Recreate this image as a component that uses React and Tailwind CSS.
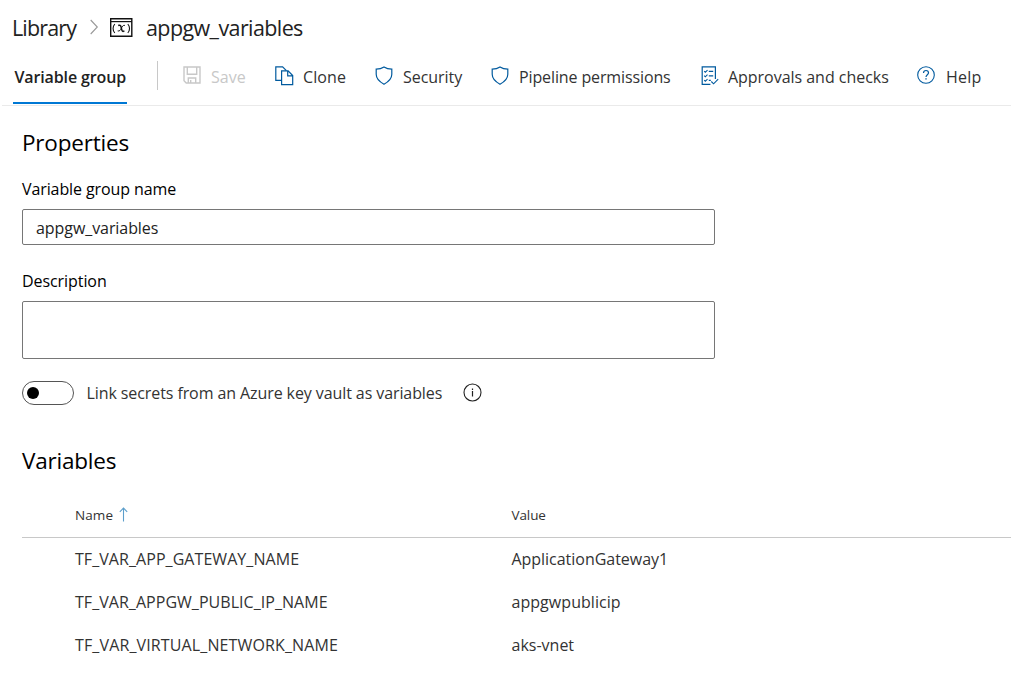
const SAVE_COLOR = "#c8c8c8";
const BLUE = "#005a9e";

const rows = [
  ["TF_VAR_APP_GATEWAY_NAME", "tracking-[0.06px]", "ApplicationGateway1", "tracking-[-0.03px]"],
  ["TF_VAR_APPGW_PUBLIC_IP_NAME", "tracking-[0.04px]", "appgwpublicip", "tracking-[0.05px]"],
  ["TF_VAR_VIRTUAL_NETWORK_NAME", "tracking-[0.13px]", "aks-vnet", "tracking-normal"],
];

function VariableIcon() {
  return (
    <svg className="h-[20px] w-[23px] shrink-0" viewBox="0 0 23 20" fill="none" stroke="#111">
      <path d="M.7 .7h21.1v17.6H.7z" strokeWidth="1.4" />
      <path d="M.7 3.6h21.1" strokeWidth="1.2" />
      <path d="M4.8 6c-2.3 2.5-2.3 6.5 0 9M17.8 6c2.3 2.5 2.3 6.5 0 9" strokeWidth="1.1" />
      <path d="M8.2 7.5c1.5-.8 2.5-.2 2.9 1.6l.7 2.8c.4 1.6 1.3 2 2.6.9" strokeWidth="1.5" />
      <path d="M14.9 7.4c-1.8-.5-2.8 1.2-3.6 2.9s-1.7 3.2-3.6 2.6" strokeWidth="1" />
    </svg>
  );
}

function SaveIcon() {
  return (
    <svg className="h-[18px] w-[18px]" viewBox="0 0 18 18" fill="none" stroke={SAVE_COLOR} strokeWidth="1.4">
      <path d="M1 1h16v16H3.2L1 14.8zM4.3 1v7.3h9.4V1M5.3 17v-5h7.4v5M7.7 14v3" />
    </svg>
  );
}

function CloneIcon() {
  return (
    <svg className="h-[20px] w-[19px]" viewBox="0 0 19 20" fill="none" stroke={BLUE} strokeWidth="1.2">
      <path d="M6.6 14.4H.8V.8h6.8l3.8 3.8" />
      <path d="M6.6 4.9h6.5l4.6 4.7v9H6.6zM12.7 4.9v5h5" />
    </svg>
  );
}

function ShieldIcon() {
  return (
    <svg className="h-[19px] w-[18px]" viewBox="0 0 18 19" fill="none" stroke={BLUE} strokeWidth="1.2">
      <path d="M9 .9c2.2 1.5 4.8 2.2 7.8 2.2v5.2c0 4.2-2.9 7.3-7.8 9.9-4.9-2.6-7.8-5.7-7.8-9.9V3.1C4.2 3.1 6.8 2.4 9 .9z" />
    </svg>
  );
}

function ChecksIcon() {
  return (
    <svg className="h-[20px] w-[18px]" viewBox="0 0 18 20" fill="none" stroke={BLUE} strokeWidth="1.2">
      <path d="M14.4 13V.8H1.2v17.6h8.2" />
      <path d="M7.8 5.4h4.4M7.8 9.9h4.4M7.8 14.4h2M3.2 5.2l1.1 1.1 2.2-2.2M3.2 9.7l1.1 1.1 2.2-2.2M3.2 14.2l1.1 1.1 2.2-2.2M10.3 15.5l2.3 2.3 4.6-4.6" strokeWidth="1.1" />
    </svg>
  );
}

function HelpIcon() {
  return (
    <svg className="h-[18px] w-[18px]" viewBox="0 0 18 18" fill="none" stroke={BLUE} strokeWidth="1.1">
      <circle cx="9" cy="9" r="8.3" />
      <path d="M6.5 7c0-1.6 1-2.5 2.5-2.5s2.5.9 2.5 2.3c0 1.9-2.5 2-2.5 4.3" strokeWidth="1.2" />
      <path d="M8.3 12.3h1.4v1.3H8.3z" fill={BLUE} stroke="none" />
    </svg>
  );
}

function InfoIcon() {
  return (
    <svg className="-mt-px h-[19px] w-[19px]" viewBox="0 0 19 19" fill="none" stroke="#222" strokeWidth="1.1">
      <circle cx="9.5" cy="9.5" r="8.5" />
      <path d="M9.5 8v5.4M9.5 5.6v1.4" strokeWidth="1.2" />
    </svg>
  );
}

function Action({ icon, label, width, gap }) {
  return (
    <button className={`flex shrink-0 items-start whitespace-nowrap text-left ${width} ${gap}`}>
      {icon}
      {label}
    </button>
  );
}

export default function App() {
  return (
    <div className="h-[688px] w-[1011px] overflow-hidden bg-white font-['Open_Sans',sans-serif] text-[16px] leading-[22px] text-[#333]">
      <header className="flex h-[56px] items-start pl-[12px] pt-[14px] text-[21.5px] leading-[28px] text-[#222]">
        <span className="w-[78px] tracking-[-0.85px]">Library</span>
        <svg className="mt-[5px] h-[16px] w-[20px]" viewBox="0 0 20 16" fill="none" stroke="#999" strokeWidth="1.1">
          <path d="M.7 1l6.6 7-6.6 7" />
        </svg>
        <div className="mt-[4px] w-[36px]"><VariableIcon /></div>
        <h1 className="tracking-[-0.6px]">appgw_variables</h1>
      </header>

      <nav className="ml-[2px] flex h-[50px] items-start border-b border-[#eaeaea] pl-[11px]">
        <div className="h-[48px] w-[114px] border-b-2 border-[#0078d4] pl-[1.5px] pt-[10px] font-semibold tracking-[-0.13px] whitespace-nowrap text-[#222]">Variable group</div>
        <div className="ml-[30px] mt-[5px] h-[29px] w-px bg-[#c8c8c8]" />
        <div className="flex items-start pl-[25px] pt-[10px]">
          <Action width="w-[92px] text-[#c8c8c8]" gap="gap-[10px]" icon={<SaveIcon />} label={<span>Save</span>} />
          <Action width="w-[100px]" gap="gap-[9px]" icon={<CloneIcon />} label={<span className="tracking-[0.1px]">Clone</span>} />
          <Action width="w-[116px]" gap="gap-[10px]" icon={<ShieldIcon />} label={<span className="tracking-[-0.05px]">Security</span>} />
          <Action width="w-[210px]" gap="gap-[10px]" icon={<ShieldIcon />} label={<span className="tracking-[-0.12px]">Pipeline permissions</span>} />
          <Action width="w-[216px]" gap="gap-[9px]" icon={<ChecksIcon />} label={<span className="tracking-[-0.03px]">Approvals and checks</span>} />
          <Action width="w-[70px]" gap="gap-[11px]" icon={<HelpIcon />} label={<span className="tracking-[0.2px]">Help</span>} />
        </div>
      </nav>

      <main className="pl-[22px] text-black">
        <h2 className="h-[72px] pt-[23px] text-[22.5px] leading-[28px] tracking-[-0.2px]">Properties</h2>
        <label className="block h-[31px] tracking-[-0.1px]">Variable group name</label>
        <div className="flex h-[36px] w-[693px] items-center rounded-[2px] border border-[#767676] pl-[13px] pt-[2px] tracking-[-0.07px] text-[#222]">appgw_variables</div>
        <label className="mt-[25px] block h-[31px] tracking-[-0.07px]">Description</label>
        <div className="h-[58px] w-[693px] rounded-[2px] border border-[#767676]" />

        <div className="mt-[22px] flex h-[24px] items-center text-[#333]">
          <div className="flex h-[24px] w-[52px] items-center rounded-full border border-[#555] pl-[4px]">
            <div className="size-[12px] rounded-full bg-black" />
          </div>
          <span className="ml-[12.5px] w-[376.5px] tracking-[-0.09px]">Link secrets from an Azure key vault as variables</span>
          <InfoIcon />
        </div>

        <h2 className="mt-[42px] h-[58px] text-[22.5px] leading-[28px] tracking-[-0.2px]">Variables</h2>
        <div className="flex h-[33px] border-b border-[#c8c8c8] pl-[53px] text-[13.5px] leading-[20px] text-[#333]">
          <div className="flex w-[436.5px] gap-[6px]">
            <span className="tracking-[0.1px]">Name</span>
            <svg className="mt-[2px] h-[15px] w-[9px]" viewBox="0 0 9 15" fill="none" stroke="#5c9ecb" strokeWidth="1.1">
              <path d="M4.5 14.5V1.2M.8 4.8l3.7-3.7 3.7 3.7" />
            </svg>
          </div>
          <span className="tracking-[-0.1px]">Value</span>
        </div>
        {rows.map(([name, nameTracking, value, valueTracking]) => (
          <div key={name} className="flex h-[43px] items-center pb-[2px] pl-[53px] text-[#333]">
            <span className={`w-[436.5px] ${nameTracking}`}>{name}</span>
            <span className={valueTracking}>{value}</span>
          </div>
        ))}
      </main>
    </div>
  );
}
